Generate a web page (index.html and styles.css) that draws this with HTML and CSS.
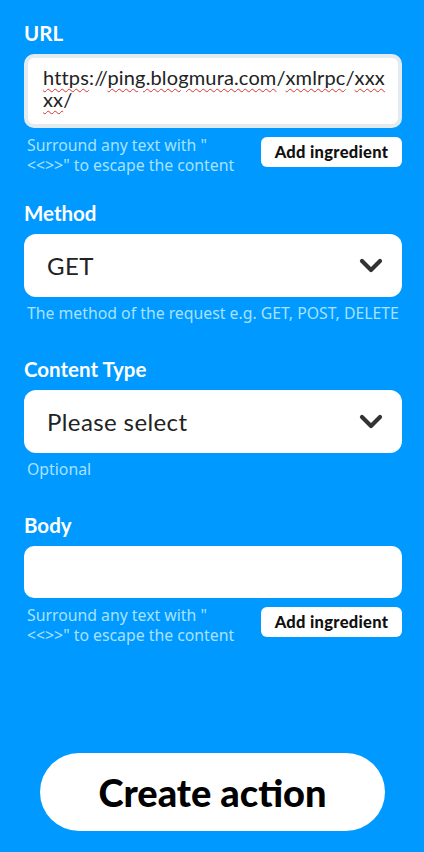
FILE: index.html
```html
<!DOCTYPE html>
<html>
<head>
<meta charset="utf-8">
<link rel="stylesheet" href="styles.css">
</head>
<body>
<div class="page">
  <section class="field">
    <div class="label">URL</div>
    <div class="textarea"><span class="spell">https</span>://<span class="spell">ping.blogmura.com</span>/<span class="spell">xmlrpc</span>/<span class="spell">xxx</span><br><span class="spell">xx</span>/</div>
    <div class="helper-row">
      <div class="helper">Surround any text with "<br>&lt;&lt;&gt;&gt;" to escape the content</div>
      <button class="ingredient">Add ingredient</button>
    </div>
  </section>

  <section class="field">
    <div class="label">Method</div>
    <div class="select">
      <span>GET</span>
      <svg class="chev" width="24" height="16" viewBox="0 0 24 16"><path d="M3 3 L12 12 L21 3" fill="none" stroke="#333" stroke-width="4.2" stroke-linecap="round" stroke-linejoin="round"/></svg>
    </div>
    <div class="helper single">The method of the request e.g. GET, POST, DELETE</div>
  </section>

  <section class="field">
    <div class="label">Content Type</div>
    <div class="select">
      <span>Please select</span>
      <svg class="chev" width="24" height="16" viewBox="0 0 24 16"><path d="M3 3 L12 12 L21 3" fill="none" stroke="#333" stroke-width="4.2" stroke-linecap="round" stroke-linejoin="round"/></svg>
    </div>
    <div class="helper single">Optional</div>
  </section>

  <section class="field">
    <div class="label">Body</div>
    <div class="input"></div>
    <div class="helper-row">
      <div class="helper">Surround any text with "<br>&lt;&lt;&gt;&gt;" to escape the content</div>
      <button class="ingredient">Add ingredient</button>
    </div>
  </section>

  <div class="actions">
    <button class="create">Create action</button>
  </div>
</div>
</body>
</html>
```
FILE: styles.css
```css
html, body {
  margin: 0;
  padding: 0;
  background: #0099ff;
}
body {
  font-family: Lato, "Noto Sans", sans-serif;
  width: 424px;
  height: 852px;
  overflow: hidden;
}
.page {
  padding: 21px 22px 0 24px;
  display: flex;
  flex-direction: column;
}
.field {
  display: flex;
  flex-direction: column;
}
.label {
  color: #fff;
  font-weight: 700;
  font-size: 20.5px;
  line-height: 24px;
  margin-bottom: 9px;
}
.textarea {
  background: #fff;
  border: 4px solid #e3ebf0;
  border-radius: 10px;
  padding: 8px 10px 8px 15px;
  font-size: 20px;
  line-height: 22px;
  letter-spacing: 0.15px;
  color: #222;
  height: 50px;
  white-space: nowrap;
}
.spell {
  text-decoration: underline wavy #d33;
  text-decoration-thickness: 1px;
  text-underline-offset: 3px;
}
.helper-row {
  display: flex;
  justify-content: space-between;
  align-items: flex-start;
  margin-top: 7px;
}
.helper {
  color: #a8e2ff;
  font-family: "Noto Sans", Lato, sans-serif;
  font-size: 15.8px;
  line-height: 20px;
  padding-left: 3px;
  white-space: nowrap;
}
.helper.single {
  margin-top: 6px;
}
.ingredient {
  background: #fff;
  border: none;
  border-radius: 6px;
  font-family: Lato, "Noto Sans", sans-serif;
  font-weight: 900;
  font-size: 16.5px;
  letter-spacing: 0.3px;
  color: #111;
  width: 141px;
  height: 30px;
  padding: 0;
  margin-top: 2px;
}
.select {
  background: #fff;
  border-radius: 12px;
  height: 63px;
  display: flex;
  align-items: center;
  justify-content: space-between;
  padding: 0 19px 0 23px;
  font-size: 24px;
  letter-spacing: 0.4px;
  color: #222;
}
.input {
  background: #fff;
  border-radius: 10px;
  height: 52px;
}
.field + .field {
  margin-top: 26px;
}
.field:nth-of-type(3) {
  margin-top: 34px;
}
.field:nth-of-type(4) {
  margin-top: 34px;
}
.actions {
  display: flex;
  justify-content: flex-start;
  margin-top: 108px;
  padding-left: 16px;
}
.create {
  width: 345px;
  height: 78px;
  border: none;
  border-radius: 39px;
  background: #fff;
  color: #000;
  font-family: Lato, "Noto Sans", sans-serif;
  font-weight: 900;
  font-size: 38px;
  padding: 0;
}
```
